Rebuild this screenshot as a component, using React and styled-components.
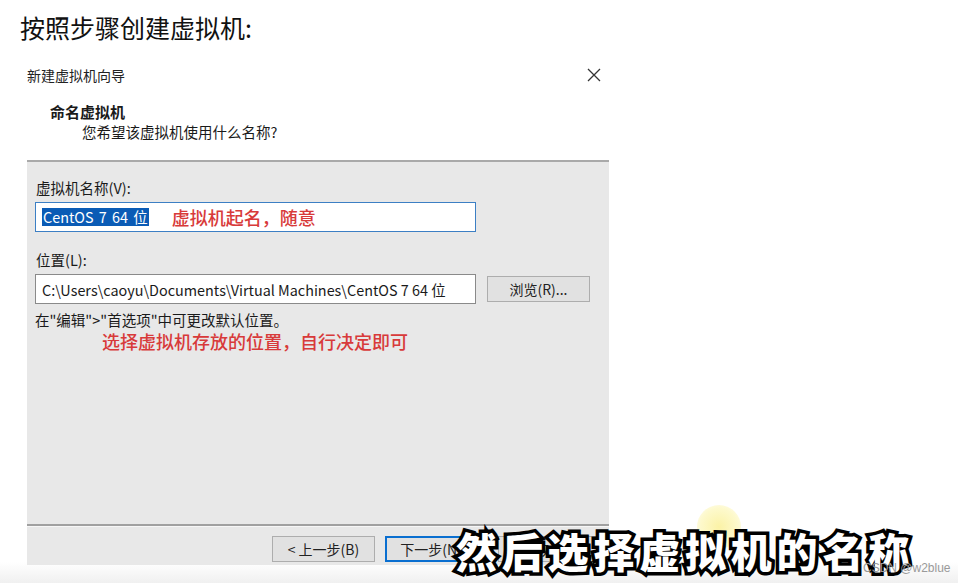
import styled, { createGlobalStyle } from "styled-components"

const GlobalStyle = createGlobalStyle`
  html, body {
    margin: 0;
    padding: 0;
    background: #ffffff;
  }
  * {
    box-sizing: border-box;
  }
`

const ui = `"Noto Sans CJK SC", "Noto Sans", sans-serif`

const Page = styled.div`
  position: relative;
  width: 958px;
  height: 583px;
  overflow: hidden;
  background: linear-gradient(to bottom, #ffffff 0, #ffffff 562px, #f0f0f0 583px);
  font-family: ${ui};
  color: #1a1a1a;
`

const PageTitle = styled.h1`
  margin: 0;
  padding: 10px 0 0 20px;
  height: 58px;
  font-size: 25px;
  font-weight: 400;
  line-height: 34px;
  color: #111;
`

const Wizard = styled.div`
  width: 582px;
  margin-left: 27px;
  display: flex;
  flex-direction: column;
`

const TitleBar = styled.div`
  height: 34px;
  display: flex;
  align-items: center;
  justify-content: space-between;
  font-size: 14px;
  color: #222;
`

const CloseButton = styled.span`
  width: 32px;
  display: flex;
  justify-content: center;
  margin-right: -1px;
`

const Heading = styled.div`
  padding: 10px 0 18px 23px;
  background: #ffffff;
`

const HeadingTitle = styled.div`
  font-size: 15px;
  font-weight: 700;
  line-height: 20px;
`

const HeadingSub = styled.div`
  margin-left: 32px;
  font-size: 14.5px;
  line-height: 20px;
`

const Body = styled.div`
  height: 364px;
  background: #e8e8e8;
  border-top: 2px solid #a9a9a9;
  padding: 16px 8px 0 8px;
  display: flex;
  flex-direction: column;
`

const Label = styled.div`
  font-size: 14.5px;
  line-height: 20px;
  margin-left: 1px;
  margin-top: ${(p) => p.$top || 0}px;
`

const Row = styled.div`
  display: flex;
  align-items: center;
  gap: 11px;
  margin-top: 4px;
`

const Field = styled.div`
  width: 441px;
  height: 30px;
  background: #ffffff;
  border: 1px solid ${(p) => (p.$focused ? "#3c7fc4" : "#8a8a8a")};
  display: flex;
  align-items: center;
  padding-left: 6px;
  font-size: 14.4px;
  white-space: nowrap;
  overflow: hidden;
`

const Selected = styled.span`
  background: #0a5bb5;
  color: #ffffff;
  line-height: 18px;
  padding: 0 1px;
  word-spacing: 2px;
`

const Annotation = styled.span`
  color: #d83a3a;
  font-size: 18px;
  font-weight: 500;
  margin-left: ${(p) => p.$indent || 0}px;
  line-height: 22px;
`

const Note = styled.div`
  margin-top: 6px;
  font-size: 14.5px;
  line-height: 20px;
`

const Button = styled.button`
  width: 103px;
  height: 26px;
  background: #e1e1e1;
  border: ${(p) => (p.$primary ? "2px solid #0a6fd0" : "1px solid #adadad")};
  font-family: ${ui};
  font-size: 14px;
  color: #222;
  padding: 0;
`

const Footer = styled.div`
  height: 41px;
  background: #e8e8e8;
  border-top: 2px solid #a0a0a0;
  box-shadow: inset 0 1px 0 #f6f6f6;
  display: flex;
  justify-content: flex-end;
  align-items: flex-start;
  gap: 10px;
  padding: 10px 8px 0 0;
`

const Caption = styled.div`
  position: absolute;
  left: 456px;
  top: 524px;
  font-family: ${ui};
  font-size: 41px;
  font-weight: 900;
  letter-spacing: 4.8px;
  line-height: 52px;
  color: #ffffff;
  -webkit-text-stroke: 7px #000000;
  paint-order: stroke fill;
  white-space: nowrap;
`

const CursorGlow = styled.div`
  position: absolute;
  left: 697px;
  top: 505px;
  width: 44px;
  height: 44px;
  border-radius: 50%;
  background: radial-gradient(circle, rgba(250, 240, 150, 0.85) 0%, rgba(252, 245, 170, 0.6) 60%, rgba(255, 250, 200, 0) 100%);
`

const Watermark = styled.div`
  position: absolute;
  left: 863px;
  top: 561px;
  font-family: "Liberation Sans", Arial, sans-serif;
  font-size: 12px;
  color: #9a9a9a;
  white-space: nowrap;
`

function CloseIcon() {
  return (
    <svg width="14" height="14" viewBox="0 0 14 14">
      <path d="M1 1 L13 13 M13 1 L1 13" stroke="#333" strokeWidth="1.3" fill="none" />
    </svg>
  )
}

function App() {
  return (
    <Page>
      <GlobalStyle />
      <PageTitle>按照步骤创建虚拟机:</PageTitle>
      <Wizard>
        <TitleBar>
          <span>新建虚拟机向导</span>
          <CloseButton>
            <CloseIcon />
          </CloseButton>
        </TitleBar>
        <Heading>
          <HeadingTitle>命名虚拟机</HeadingTitle>
          <HeadingSub>您希望该虚拟机使用什么名称?</HeadingSub>
        </Heading>
        <Body>
          <Label>虚拟机名称(V):</Label>
          <Row>
            <Field $focused>
              <Selected>CentOS 7 64 位</Selected>
              <Annotation $indent={23}>虚拟机起名，随意</Annotation>
            </Field>
          </Row>
          <Label $top={18}>位置(L):</Label>
          <Row>
            <Field>C:\Users\caoyu\Documents\Virtual Machines\CentOS 7 64 位</Field>
            <Button>浏览(R)...</Button>
          </Row>
          <Note>在"编辑">"首选项"中可更改默认位置。</Note>
          <Annotation $indent={67}>选择虚拟机存放的位置，自行决定即可</Annotation>
        </Body>
        <Footer>
          <Button>&lt; 上一步(B)</Button>
          <Button $primary>下一步(N) &gt;</Button>
          <Button>取消</Button>
        </Footer>
      </Wizard>
      <CursorGlow />
      <Caption>然后选择虚拟机的名称</Caption>
      <Watermark>CSDN @w2blue</Watermark>
    </Page>
  )
}

export default App
